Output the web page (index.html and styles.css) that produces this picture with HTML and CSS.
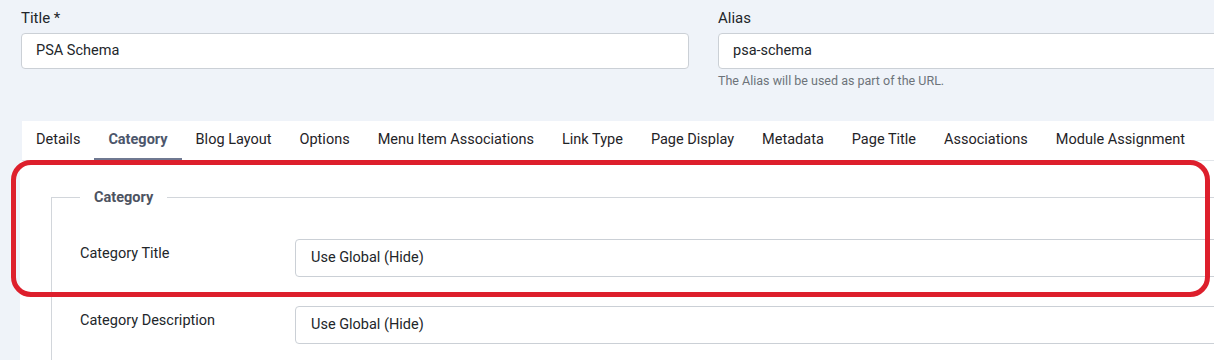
FILE: index.html
```html
<!DOCTYPE html>
<html lang="en">
<head>
<meta charset="utf-8">
<title>Menu Item: Category Blog</title>
<link rel="stylesheet" href="styles.css">
</head>
<body>
<div class="page">
  <div class="top-fields">
    <div class="field">
      <label class="field-label">Title *</label>
      <div class="text-input">PSA Schema</div>
    </div>
    <div class="field">
      <label class="field-label">Alias</label>
      <div class="text-input">psa-schema</div>
      <div class="help">The Alias will be used as part of the URL.</div>
    </div>
  </div>

  <div class="tabs">
    <div class="tab">Details</div>
    <div class="tab active">Category</div>
    <div class="tab">Blog Layout</div>
    <div class="tab">Options</div>
    <div class="tab">Menu Item Associations</div>
    <div class="tab">Link Type</div>
    <div class="tab">Page Display</div>
    <div class="tab">Metadata</div>
    <div class="tab">Page Title</div>
    <div class="tab">Associations</div>
    <div class="tab">Module Assignment</div>
  </div>

  <div class="panel">
    <fieldset class="group">
      <legend class="legend">Category</legend>
      <div class="row">
        <div class="row-label">Category Title</div>
        <div class="select">Use Global (Hide)</div>
      </div>
      <div class="row">
        <div class="row-label">Category Description</div>
        <div class="select">Use Global (Hide)</div>
      </div>
    </fieldset>
  </div>
</div>
<div class="highlight"></div>
</body>
</html>
```

FILE: styles.css
```css
html, body {
  margin: 0;
  padding: 0;
}
body {
  position: relative;
  width: 1214px;
  height: 360px;
  overflow: hidden;
  background: #eff3f9;
  font-family: Roboto, "Liberation Sans", Arial, sans-serif;
  color: #22262a;
}
.page {
  width: 1400px;
  padding-left: 20px;
}
.top-fields {
  display: grid;
  grid-template-columns: 668px 668px;
  column-gap: 29px;
  padding-top: 8px;
  padding-left: 1px;
}
.field-label {
  display: block;
  font-size: 15px;
  line-height: 20px;
  margin-bottom: 5px;
  color: #22262a;
}
.text-input {
  box-sizing: border-box;
  height: 36px;
  line-height: 34px;
  border: 1px solid #cbd0d6;
  border-radius: 4px;
  background: #fff;
  padding: 0 14px;
  font-size: 14.5px;
  color: #22262a;
}
.help {
  margin-top: 4px;
  font-size: 12.5px;
  line-height: 16px;
  color: #6d737a;
}
.tabs {
  display: flex;
  margin-top: 32px;
  margin-left: 2px;
  height: 39px;
  background: #fff;
  border-bottom: 1px solid #e1e5ea;
}
.tab {
  box-sizing: border-box;
  padding: 0 14px;
  line-height: 37px;
  font-size: 14.5px;
  color: #1f2327;
  white-space: nowrap;
}
.tab.active {
  color: #4c566b;
  font-weight: 700;
  border-bottom: 3px solid #6f7891;
  line-height: 37px;
  height: 40px;
}
.panel {
  background: #fff;
  padding: 28px 0 40px 31px;
  height: 260px;
}
.group {
  margin: 0;
  border: 1px solid #d2d6db;
  border-right: none;
  padding: 33px 0 0 28px;
  height: 300px;
}
.legend {
  padding: 0 14px;
  font-size: 14.5px;
  font-weight: 700;
  color: #4d5361;
}
.row {
  display: flex;
  align-items: flex-start;
  margin-bottom: 29px;
}
.row-label {
  width: 215px;
  padding-top: 5px;
  font-size: 14.5px;
  line-height: 20px;
  color: #22262a;
}
.select {
  box-sizing: border-box;
  width: 1000px;
  height: 38px;
  line-height: 36px;
  border: 1px solid #cbd0d6;
  border-radius: 4px;
  background: #fff;
  padding: 0 15px;
  font-size: 14.5px;
  color: #22262a;
}
.highlight {
  position: absolute;
  left: 11px;
  top: 160px;
  width: 1199px;
  height: 137px;
  box-sizing: border-box;
  border: 5px solid #dd1f2c;
  border-radius: 20px;
  pointer-events: none;
}
```
